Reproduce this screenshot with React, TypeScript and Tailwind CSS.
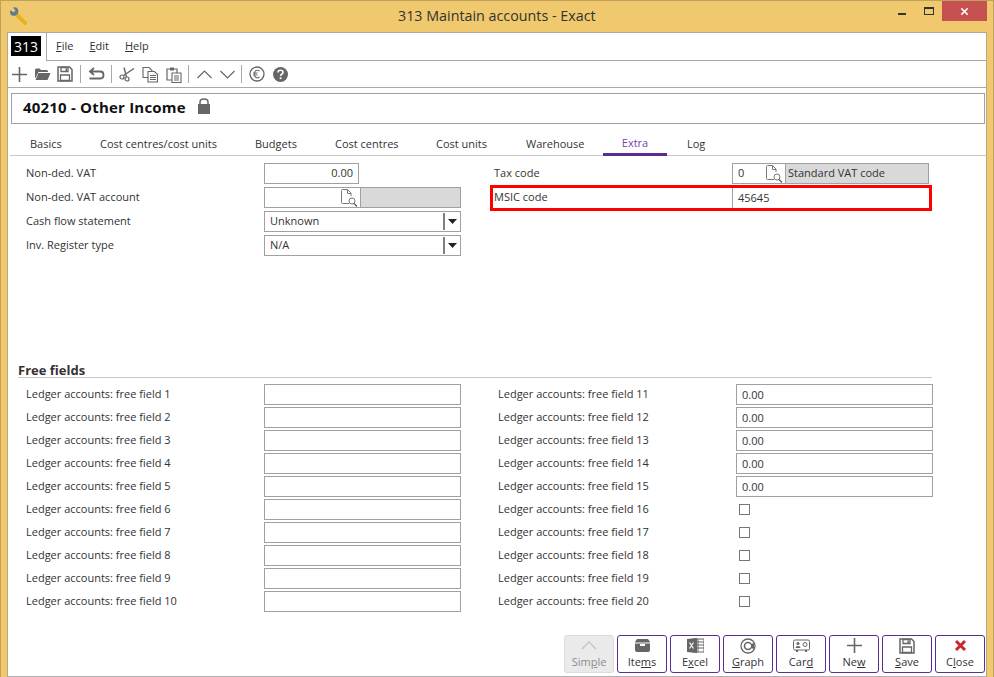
import { ReactNode } from "react";
import { X } from "lucide-react";

const G = "#666666";

const Plus = () => (
  <svg width="15" height="15" viewBox="0 0 15 15"><path d="M7.500 0v15M0 7.500h15" stroke={G} strokeWidth="1.600" /></svg>
);
const Folder = () => (
  <svg width="17" height="14" viewBox="0 0 17 14"><path d="M1 3q0-1.500 1.500-1.500h3l1.500 1.500h5.500q1.500 0 1.500 1.500v.5h-9.500l-3 6h-.5zM4.500 6h12l-3 7h-12z" fill={G} /></svg>
);
const Floppy = ({ size = 16 }: { size?: number }) => (
  <svg width={size} height={size} viewBox="0 0 16 16">
    <path d="M1 1h11.500l2.500 2.500v11.500h-14z" fill="none" stroke={G} strokeWidth="1.500" />
    <path d="M4 1.500h7v4h-7zM3.500 9h9v5.500h-9z" fill="none" stroke={G} strokeWidth="1.300" />
    <path d="M8.500 2.500h1.500v2.500h-1.500z" fill={G} />
  </svg>
);
const Undo = () => (
  <svg width="17" height="15" viewBox="0 0 17 15"><path d="M6 1l-4 3.500 4 3.500M2.500 4.500h10q3 0 3 3.500t-3 3.500h-11" fill="none" stroke={G} strokeWidth="1.800" /></svg>
);
const Scissors = () => (
  <svg width="16" height="16" viewBox="0 0 16 16">
    <circle cx="3" cy="11" r="2" fill="none" stroke={G} strokeWidth="1.200" />
    <circle cx="8" cy="13" r="2" fill="none" stroke={G} strokeWidth="1.200" />
    <path d="M4.500 9.500l10.500-7M7.500 11l-2.500-9.500" stroke={G} strokeWidth="1.400" />
  </svg>
);
const Copy = () => (
  <svg width="17" height="17" viewBox="0 0 17 17">
    <path d="M1 1.500h6l3 3v7h-9z" fill="#fff" stroke={G} strokeWidth="1.100" />
    <path d="M6 5.500h6.500l3 3v7.500h-9.500z" fill="#fff" stroke={G} strokeWidth="1.100" />
    <path d="M8 9.500h6M8 11.500h6M8 13.500h6" stroke={G} strokeWidth="1.100" />
  </svg>
);
const Paste = () => (
  <svg width="16" height="17" viewBox="0 0 16 17">
    <path d="M1 3h10v11h-10z" fill="#fff" stroke={G} strokeWidth="1.200" />
    <path d="M4 1.500h4v3h-4z" fill={G} />
    <path d="M6 7h9v9.500h-9z" fill="#fff" stroke={G} strokeWidth="1.100" />
    <path d="M8 10h5M8 12h5M8 14h5" stroke={G} strokeWidth="1.100" />
  </svg>
);
const Chevron = ({ up }: { up?: boolean }) => (
  <svg width="15" height="9" viewBox="0 0 15 9"><path d={up ? "M.5 8l7-7 7 7" : "M.5 1l7 7 7-7"} fill="none" stroke={G} strokeWidth="1.200" /></svg>
);
const EuroCircle = () => (
  <svg width="16" height="16" viewBox="0 0 16 16">
    <circle cx="8" cy="8" r="7" fill="none" stroke={G} strokeWidth="1.300" />
    <path d="M10.500 5q-1-.8-2-.8c-2 0-3 1.700-3 3.800s1 3.800 3 3.800q1 0 2-.8M4 7h4.500M4 9h4.500" fill="none" stroke={G} strokeWidth="1.100" />
  </svg>
);
const HelpCircle = () => (
  <svg width="15" height="15" viewBox="0 0 15 15">
    <circle cx="7.500" cy="7.500" r="7.500" fill={G} />
    <path d="M5 5.500q0-2.200 2.500-2.200t2.500 2q0 1.200-1.300 1.900-1.100.6-1.100 1.800" fill="none" stroke="#fff" strokeWidth="1.600" />
    <rect x="6.700" y="10.300" width="1.800" height="1.800" fill="#fff" />
  </svg>
);
const Lookup = () => (
  <svg width="17" height="18" viewBox="0 0 17 18">
    <path d="M8 14.500h-6.500q-1 0-1-1v-12q0-1 1-1h5l3.500 3.500v3" fill="none" stroke="#777" strokeWidth="1" />
    <path d="M6.500 .5v4h3.500" fill="none" stroke="#777" strokeWidth="1" />
    <circle cx="11" cy="12" r="3" fill="none" stroke="#777" strokeWidth="1" />
    <path d="M13 14.500l3 3" stroke="#555" strokeWidth="1.300" />
  </svg>
);
const Lock = () => (
  <svg width="12" height="16" viewBox="0 0 12 16">
    <path d="M2 7v-3q0-3 4-3t4 3v3" fill="none" stroke={G} strokeWidth="1.500" />
    <rect x="0" y="6" width="12" height="10" fill={G} />
  </svg>
);
const Caret = () => (
  <span className="ml-auto flex h-[17px] w-[17px] items-center justify-center border-l-2 border-[#808080]">
    <svg width="9" height="5" viewBox="0 0 9 5"><path d="M0 0h9l-4.500 5z" fill="#222" /></svg>
  </span>
);

const Sep = () => <span className="h-[18px] w-px bg-[#aaaaaa]" />;

const ItemsIcon = () => (
  <svg width="15" height="13" viewBox="0 0 15 13"><path d="M2 0h11l2 3v8q0 2-2 2h-11q-2 0-2-2v-8zM5 5v2h5v-2z" fill={G} fillRule="evenodd" /><path d="M0 4h15" stroke="#fff" /></svg>
);
const ExcelIcon = () => (
  <svg width="17" height="15" viewBox="0 0 17 15">
    <rect x="6" y="1" width="11" height="13" fill="none" stroke={G} />
    <path d="M11 1v13M6 4h11M6 7h11M6 10h11" stroke={G} />
    <path d="M0 1l10-1v15l-10-1z" fill={G} />
    <path d="M2.500 4.500l4 6M6.500 4.500l-4 6" stroke="#fff" strokeWidth="1.200" />
  </svg>
);
const GraphIcon = () => (
  <svg width="16" height="16" viewBox="0 0 16 16">
    <circle cx="8" cy="8" r="7" fill="none" stroke={G} strokeWidth="1.300" />
    <circle cx="8" cy="8" r="3.500" fill="none" stroke={G} strokeWidth="1.600" />
    <path d="M8 8l6-3v6z" fill="#fff" />
    <path d="M11 6l3-1v6l-3-1z" fill={G} />
  </svg>
);
const CardIcon = () => (
  <svg width="17" height="14" viewBox="0 0 17 14">
    <rect x="0.500" y="1" width="16" height="10" rx="1.500" fill="none" stroke={G} />
    <circle cx="5" cy="4.500" r="1.500" fill={G} />
    <path d="M2.500 9q0-2 2.500-2t2.500 2z" fill={G} />
    <circle cx="12" cy="5.500" r="2" fill="none" stroke={G} />
    <path d="M3 11v2h2v-2M12 11v2h2v-2" fill={G} />
  </svg>
);
const CloseIcon = () => (
  <svg width="13" height="13" viewBox="0 0 13 13"><path d="M2 2l9 9M11 2l-9 9" stroke="#c8282d" strokeWidth="3" /></svg>
);

function Field({ label, children }: { label: string; children: ReactNode }) {
  return (
    <div className="flex items-center">
      <div className="w-[238px] pb-px">{label}</div>
      {children}
    </div>
  );
}

function TextBox({ value }: { value?: string }) {
  return (
    <div className="flex h-[21px] w-[197px] items-center border border-[#a0a0a0] px-[5px] pt-px">
      {value}
    </div>
  );
}

function Select({ value }: { value: string }) {
  return (
    <div className="flex h-[21px] w-[197px] items-center border border-[#a0a0a0] pl-[5px]">
      {value}
      <Caret />
    </div>
  );
}

function ActionButton({ icon, children, disabled }: { icon: ReactNode; children: ReactNode; disabled?: boolean }) {
  return (
    <button
      className={`flex h-[38px] w-[50px] flex-col items-center rounded-[3px] border ${
        disabled ? "border-[#dcdcdc] bg-[#eaeaea] text-[#8a8a8a]" : "border-[#5b2d91] bg-white text-[#333333]"
      }`}
    >
      <span className="flex h-[19px] items-center">{icon}</span>
      <span className="leading-[14px]">{children}</span>
    </button>
  );
}

const tabs = ["Basics", "Cost centres/cost units", "Budgets", "Cost centres", "Cost units", "Warehouse", "Extra", "Log"];
const tabWidths: Record<string, string> = {
  Basics: "w-[90px] pl-[20px]",
  "Cost centres/cost units": "w-[155px]",
  Budgets: "w-[80px]",
  "Cost centres": "w-[101px]",
  "Cost units": "w-[90px]",
  Warehouse: "w-[77px]",
  Extra: "w-[64px] justify-center",
  Log: "w-[50px] pl-[20px]",
};

const leftFree = Array.from({ length: 10 }, (_, i) => `Ledger accounts: free field ${i + 1}`);
const rightFree = Array.from({ length: 10 }, (_, i) => `Ledger accounts: free field ${i + 11}`);

export default function App() {
  return (
    <div className="flex h-[677px] w-[994px] flex-col overflow-hidden border-x border-t border-[#c0a25e] bg-[#f0c86d] font-['Open_Sans',sans-serif] text-[11px] text-[#333333]">
      {/* title bar */}
      <div className="flex h-[31px] shrink-0 items-start">
        <svg className="ml-[8px] mt-[6px]" width="18" height="18" viewBox="0 0 18 18">
          <path d="M7 7l9 9" stroke="#e8b21a" strokeWidth="4" strokeLinecap="round" />
          <path d="M1.500 3l3 2.500 2-2-2.500-3q4-1 5 2t-1 5-5 1-1.500-5.500z" fill="#5d7a96" />
        </svg>
        <div className="flex-1 pt-[5px] pl-[371px] text-[14.3px] leading-[19px] text-[#333333]">313 Maintain accounts - Exact</div>
        <div className="mr-[6px] flex items-start">
          <span className="mt-[12px] mr-[18px] h-[2px] w-[8px] bg-[#333333]" />
          <span className="mt-[6px] mr-[8px] h-[8px] w-[10px] border border-t-2 border-[#333333]" />
          <span className="flex h-[20px] w-[45px] items-center justify-center bg-[#c75050] text-white">
            <X size={11} strokeWidth={3.500} />
          </span>
        </div>
      </div>

      {/* main window */}
      <div className="mx-[6px] flex flex-1 flex-col overflow-hidden border-x border-t border-[#b5a98a] border-t-[#a9a9a9] bg-white">
        <div className="flex h-[28px] shrink-0">
          <div className="pl-[3px] pt-[3px]">
            <div className="flex h-[20px] w-[30px] items-center justify-center bg-black text-[14px] text-white">313</div>
          </div>
          <div className="ml-[5px] flex flex-1 gap-[16px] border-l border-b border-[#a9a9a9] pl-[9px] pt-[5px] text-[#333333]">
            <span><u>F</u>ile</span>
            <span><u>E</u>dit</span>
            <span><u>H</u>elp</span>
          </div>
        </div>

        <div className="flex h-[27px] shrink-0 items-center border-b border-[#a9a9a9] pl-[4px]">
          <Plus />
          <span className="ml-[7px]"><Folder /></span>
          <span className="ml-[6px]"><Floppy /></span>
          <span className="ml-[7px] flex"><Sep /></span>
          <span className="ml-[7px]"><Undo /></span>
          <span className="ml-[6px] flex"><Sep /></span>
          <span className="ml-[7px]"><Scissors /></span>
          <span className="ml-[7px]"><Copy /></span>
          <span className="ml-[7px]"><Paste /></span>
          <span className="ml-[6px] flex"><Sep /></span>
          <span className="ml-[8px]"><Chevron up /></span>
          <span className="ml-[8px]"><Chevron /></span>
          <span className="ml-[6px] flex"><Sep /></span>
          <span className="ml-[7px]"><EuroCircle /></span>
          <span className="ml-[8px]"><HelpCircle /></span>
        </div>

        <div className="ml-[3px] mr-px mt-[5px] flex h-[31px] shrink-0 items-center gap-[12px] border border-[#a0a0a0] pl-[11px]">
          <span className="mb-[2px] text-[15px] font-bold tracking-[0.2px] text-[#111111]">40210 - Other Income</span>
          <span className="mb-[5px]"><Lock /></span>
        </div>

        {/* tabs */}
        <div className="ml-[2px] mt-[9px] flex h-[23px] shrink-0 items-stretch border-b border-[#c8c8c8]">
          {tabs.map((t) => (
            <div
              key={t}
              className={`flex items-center ${tabWidths[t]} ${
                t === "Extra" ? "mb-[-1px] border-b-[3px] border-[#5b2d91] text-[#7a3fa8]" : ""
              }`}
            >
              {t}
            </div>
          ))}
        </div>

        {/* top form */}
        <div className="flex h-[207px] shrink-0 pt-[7px]">
          <div className="ml-[18px] flex w-[464px] flex-col gap-[3px]">
            <Field label="Non-ded. VAT">
              <div className="flex h-[21px] w-[95px] items-center justify-end border border-[#a0a0a0] px-[5px]">0.00</div>
            </Field>
            <Field label="Non-ded. VAT account">
              <div className="flex h-[21px] w-[197px] border border-[#a0a0a0]">
                <div className="flex w-[95px] items-center justify-end pr-[2px]"><Lookup /></div>
                <div className="flex-1 border-l border-[#a0a0a0] bg-[#d9d9d9]" />
              </div>
            </Field>
            <Field label="Cash flow statement"><Select value="Unknown" /></Field>
            <Field label="Inv. Register type"><Select value="N/A" /></Field>
          </div>

          <div className="flex w-[442px] flex-col gap-[1px]">
            <div className="flex items-center pl-[4px]">
              <div className="w-[238px] pb-px">Tax code</div>
              <div className="flex h-[21px] w-[197px] border border-[#a0a0a0]">
                <div className="flex w-[52px] items-center justify-between pl-[5px] pr-[2px]">0<Lookup /></div>
                <div className="flex flex-1 items-center border-l border-[#a0a0a0] bg-[#d9d9d9] pl-[2px]">Standard VAT code</div>
              </div>
            </div>
            <div className="flex h-[26px] items-center border-[3px] border-[#ff0000] pl-px">
              <div className="w-[238px] pb-[2px]">MSIC code</div>
              <div className="flex h-full flex-1 items-center border-l border-[#a0a0a0] pl-[5px]">45645</div>
            </div>
          </div>
        </div>

        {/* free fields */}
        <div className="ml-[10px] w-[914px] shrink-0 border-b border-[#c8c8c8] text-[13px] leading-[14px] font-bold text-[#333333]">Free fields</div>

        <div className="ml-[18px] mt-[6px] grid shrink-0 grid-cols-[472px_1fr]">
          <div className="flex flex-col gap-[2px]">
            {leftFree.map((l) => (
              <Field key={l} label={l}><TextBox /></Field>
            ))}
          </div>
          <div className="flex flex-col gap-[2px]">
            {rightFree.map((l, i) => (
              <Field key={l} label={l}>
                {i < 5 ? (
                  <TextBox value="0.00" />
                ) : (
                  <span className="flex h-[21px] items-center pl-[3px]">
                    <span className="h-[11px] w-[11px] border border-[#777777]" />
                  </span>
                )}
              </Field>
            ))}
          </div>
        </div>

        {/* action buttons */}
        <div className="mt-auto flex h-[42px] shrink-0 justify-end gap-[3px] border-b border-[#b0b0b0] pr-px">
          <ActionButton disabled icon={<svg width="16" height="9" viewBox="0 0 16 9"><path d="M1 8l7-7 7 7" fill="none" stroke="#c4c4c4" strokeWidth="1.300" /></svg>}>
            Sim<u>p</u>le
          </ActionButton>
          <ActionButton icon={<ItemsIcon />}>Ite<u>m</u>s</ActionButton>
          <ActionButton icon={<ExcelIcon />}>E<u>x</u>cel</ActionButton>
          <ActionButton icon={<GraphIcon />}><u>G</u>raph</ActionButton>
          <ActionButton icon={<CardIcon />}>Car<u>d</u></ActionButton>
          <ActionButton icon={<Plus />}>Ne<u>w</u></ActionButton>
          <ActionButton icon={<Floppy />}><u>S</u>ave</ActionButton>
          <ActionButton icon={<CloseIcon />}>C<u>l</u>ose</ActionButton>
        </div>
      </div>
    </div>
  );
}
